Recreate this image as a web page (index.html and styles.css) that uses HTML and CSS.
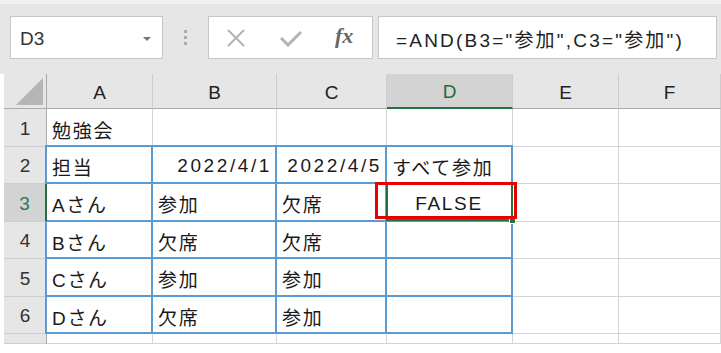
FILE: index.html
```html
<!DOCTYPE html>
<html lang="ja">

<head>
    <meta charset="UTF-8" />
    <meta name="viewport" content="width=device-width, initial-scale=1.0" />
    <title>AND関数</title>
    <link rel="stylesheet" href="styles.css">
</head>

<body>
    <div class="toolbar">
        <div class="name-box">
            <span>D3</span>
            <span class="arrow"></span>
        </div>
        <div class="grip">
            <span></span><span></span><span></span>
        </div>
        <div class="buttons">
            <svg class="icon" width="20" height="18" viewBox="0 0 20 18">
                <path d="M2 1 L18 17 M18 1 L2 17" stroke="#b3b3b3" stroke-width="2" fill="none" />
            </svg>
            <svg class="icon" width="22" height="18" viewBox="0 0 22 18">
                <path d="M1 9 L8 16 L21 3" stroke="#b3b3b3" stroke-width="3" fill="none" />
            </svg>
            <span class="fx">fx</span>
        </div>
        <div class="formula">=AND(B3="参加",C3="参加")</div>
    </div>

    <div class="sheet">
        <!-- header row -->
        <div class="corner"><span class="tri"></span></div>
        <div class="col-head">A</div>
        <div class="col-head">B</div>
        <div class="col-head">C</div>
        <div class="col-head active">D</div>
        <div class="col-head">E</div>
        <div class="col-head">F</div>

        <!-- row 1 -->
        <div class="row-head">1</div>
        <div class="cell">勉強会</div>
        <div class="cell"></div>
        <div class="cell"></div>
        <div class="cell"></div>
        <div class="cell"></div>
        <div class="cell"></div>

        <!-- row 2 -->
        <div class="row-head">2</div>
        <div class="cell blue first top">担当</div>
        <div class="cell blue top right">2022/4/1</div>
        <div class="cell blue top right">2022/4/5</div>
        <div class="cell blue top">すべて参加</div>
        <div class="cell"></div>
        <div class="cell"></div>

        <!-- row 3 -->
        <div class="row-head active">3</div>
        <div class="cell blue">Aさん</div>
        <div class="cell blue">参加</div>
        <div class="cell blue">欠席</div>
        <div class="cell blue center current">
            FALSE
            <span class="sel"><span class="handle"></span></span>
            <span class="mark"></span>
        </div>
        <div class="cell"></div>
        <div class="cell"></div>

        <!-- row 4 -->
        <div class="row-head">4</div>
        <div class="cell blue first">Bさん</div>
        <div class="cell blue">欠席</div>
        <div class="cell blue">欠席</div>
        <div class="cell blue"></div>
        <div class="cell"></div>
        <div class="cell"></div>

        <!-- row 5 -->
        <div class="row-head">5</div>
        <div class="cell blue first">Cさん</div>
        <div class="cell blue">参加</div>
        <div class="cell blue">参加</div>
        <div class="cell blue"></div>
        <div class="cell"></div>
        <div class="cell"></div>

        <!-- row 6 -->
        <div class="row-head">6</div>
        <div class="cell blue first">Dさん</div>
        <div class="cell blue">欠席</div>
        <div class="cell blue">参加</div>
        <div class="cell blue"></div>
        <div class="cell"></div>
        <div class="cell"></div>

        <!-- row 7 (cut off) -->
        <div class="row-head"></div>
        <div class="cell"></div>
        <div class="cell"></div>
        <div class="cell"></div>
        <div class="cell"></div>
        <div class="cell"></div>
        <div class="cell"></div>
    </div>
</body>

</html>
```

FILE: styles.css
```css
/* Page */

* {
    box-sizing: border-box;
}

body {
    margin: 0;
    background: #fff;
    font-family: "Liberation Sans", "Noto Sans CJK JP", sans-serif;
    color: #1a1a1a;
    width: 721px;
    height: 353px;
    overflow: hidden;
}
/* Formula bar */

.toolbar {
    display: flex;
    align-items: flex-start;
    height: 74px;
    border-top: 4px solid #f2f2f2;
    padding: 12px 4px 0 10px;
    background: #e6e6e6;
}

.name-box {
    display: flex;
    align-items: center;
    justify-content: space-between;
    width: 153px;
    height: 43px;
    padding: 2px 11px 0 9px;
    background: #fff;
    border: 1px solid #c6c6c6;
    font-size: 19px;
    color: #333;
}

.name-box .arrow {
    width: 0;
    height: 0;
    border-left: 4px solid transparent;
    border-right: 4px solid transparent;
    border-top: 4px solid #777;
}

.grip {
    display: flex;
    flex-direction: column;
    align-items: center;
    justify-content: center;
    gap: 3px;
    width: 45px;
    height: 43px;
}

.grip span {
    width: 3px;
    height: 3px;
    background: #ababab;
}

.buttons {
    display: flex;
    align-items: center;
    width: 165px;
    height: 43px;
    padding-left: 17px;
    background: #fff;
    border: 1px solid #c6c6c6;
}

.buttons .icon:nth-child(1) {
    margin-right: 34px;
}

.buttons .icon:nth-child(2) {
    margin-right: 33px;
}

.fx {
    font-family: "Liberation Serif", serif;
    font-style: italic;
    font-weight: bold;
    font-size: 22px;
    color: #666;
    margin-top: -3px;
}

.formula {
    flex: 1;
    height: 43px;
    margin-left: 5px;
    padding: 2px 0 0 17px;
    display: flex;
    align-items: center;
    background: #fff;
    border: 1px solid #c6c6c6;
    font-size: 19px;
    letter-spacing: 2.2px;
    color: #222;
    white-space: nowrap;
}
/* Sheet grid */

.sheet {
    display: grid;
    grid-template-columns: 43px 106px 124px 110px 126px 106px 1fr;
    grid-template-rows: 35px 38px 37px 38px 37px 38px 37px 10px;
    margin-left: 4px;
    font-size: 19px;
    letter-spacing: 1.7px;
    background: #fff;
}

.corner,
.col-head,
.row-head {
    background: #e6e6e6;
    display: flex;
    align-items: center;
    justify-content: center;
    color: #222;
    letter-spacing: 0;
}

.corner {
    position: relative;
    border-right: 1px solid #ababab;
    border-bottom: 1px solid #ababab;
}

.corner .tri {
    position: absolute;
    right: 3px;
    bottom: 3px;
    width: 27px;
    height: 27px;
    background: #b6b6b6;
    clip-path: polygon(100% 0, 100% 100%, 0 100%);
}

.col-head {
    padding-top: 3px;
    border-right: 1px solid #cdcdcd;
    border-bottom: 1px solid #ababab;
}

.col-head.active {
    background: #d3d3d3;
    color: #1e6b40;
    border-bottom: 2px solid #217346;
}

.row-head {
    padding-top: 2px;
    border-right: 1px solid #ababab;
    border-bottom: 1px solid #cdcdcd;
    color: #333;
}

.row-head.active {
    background: #d3d3d3;
    color: #2a7a55;
    border-right: 2px solid #217346;
}

.cell {
    display: flex;
    align-items: center;
    padding: 3px 5px 0 5px;
    white-space: nowrap;
    border-right: 1px solid #d4d4d4;
    border-bottom: 1px solid #d4d4d4;
}

.cell.right {
    justify-content: flex-end;
    padding-right: 3px;
    letter-spacing: 2.6px;
}

.cell.center {
    justify-content: center;
}
/* Blue table borders */

.cell.blue {
    border-right: 2px solid #5b9bd5;
    border-bottom: 2px solid #5b9bd5;
}

.cell.blue.top {
    box-shadow: 0 -2px 0 #5b9bd5;
}

.cell.blue.first {
    box-shadow: -2px 0 0 #5b9bd5;
}

.cell.blue.first.top {
    box-shadow: -2px 0 0 #5b9bd5, 0 -2px 0 #5b9bd5, -2px -2px 0 #5b9bd5;
}
/* Active cell and annotation */

.current {
    position: relative;
}

.sel {
    position: absolute;
    top: -1px;
    left: -1px;
    right: -2px;
    bottom: -1px;
    border: 2px solid #217346;
    z-index: 2;
}

.handle {
    position: absolute;
    right: -5px;
    bottom: -5px;
    width: 7px;
    height: 7px;
    background: #217346;
    border: 1px solid #fff;
}

.mark {
    position: absolute;
    top: -2px;
    left: -12px;
    right: -6px;
    bottom: 1px;
    border: 3px solid #e60000;
    z-index: 3;
}
```
